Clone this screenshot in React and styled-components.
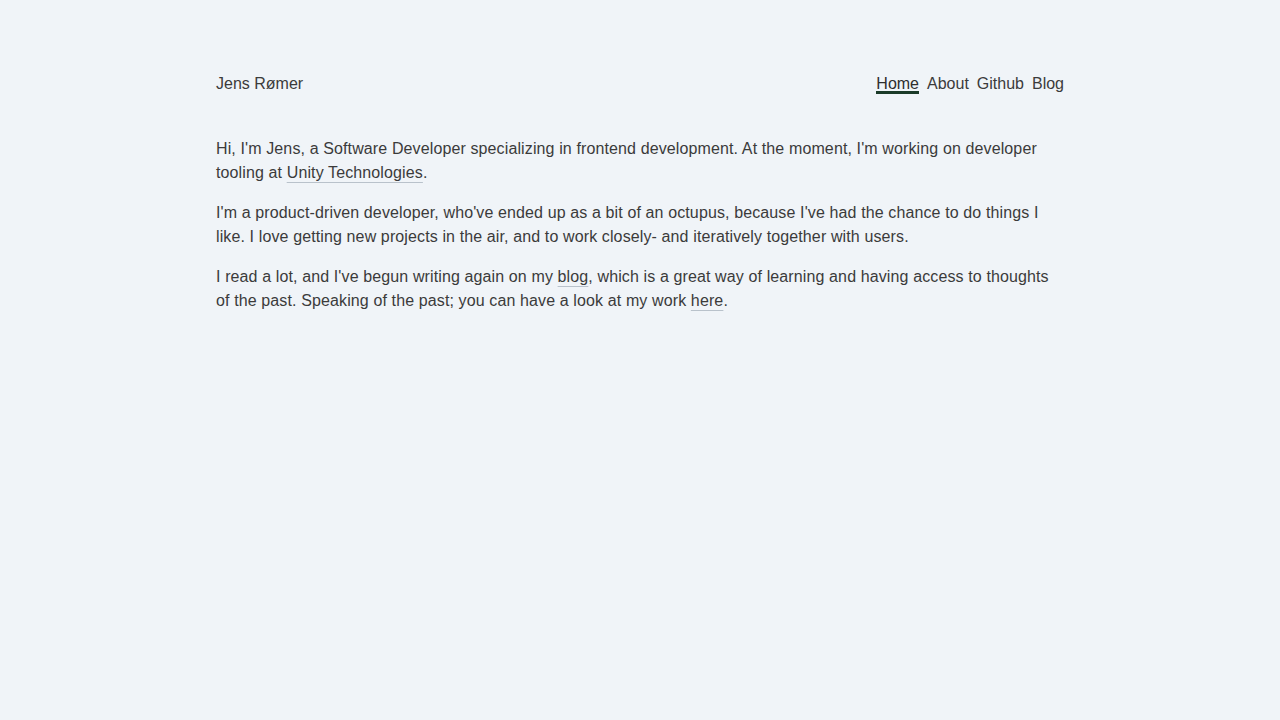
import React from 'react';
import styled, { createGlobalStyle } from 'styled-components';

const GlobalStyle = createGlobalStyle`
  body {
    margin: 0;
    background: #f0f4f8;
    color: #3b3b3b;
    font-family: "Liberation Sans", Arial, sans-serif;
    font-size: 16px;
    line-height: 24px;
  }
`

const Page = styled.div`
  width: 848px;
  margin: 0 auto;
  padding-top: 72px;
`

const Header = styled.header`
  display: flex;
  justify-content: space-between;
  align-items: flex-start;
  height: 24px;
  margin-bottom: 41px;
`

const Name = styled.div`
  color: #3b3b3b;
`

const Nav = styled.nav`
  display: flex;
  gap: 8px;
`

const NavLink = styled.a`
  display: inline-block;
  color: ${p => (p.active ? '#2e2e2e' : '#3b3b3b')};
  text-decoration: none;
  line-height: 15px;
  padding-top: 4px;
  border-bottom: 3px solid ${p => (p.active ? '#1b3b29' : 'transparent')};
`

const Main = styled.main`
  letter-spacing: 0.12px;
`

const Para = styled.p`
  margin: 0 0 16px;
`

const Link = styled.a`
  color: #3b3b3b;
  text-decoration: underline;
  text-decoration-color: #b9c2cb;
  text-decoration-thickness: 1px;
  text-underline-offset: 4px;
`

export default function App() {
  return (
    <Page>
      <GlobalStyle />
      <Header>
        <Name>Jens Rømer</Name>
        <Nav>
          <NavLink active>Home</NavLink>
          <NavLink>About</NavLink>
          <NavLink>Github</NavLink>
          <NavLink>Blog</NavLink>
        </Nav>
      </Header>
      <Main>
        <Para>
          Hi, I'm Jens, a Software Developer specializing in frontend development. At the moment, I'm working on developer tooling at <Link>Unity Technologies</Link>.
        </Para>
        <Para>
          I'm a product-driven developer, who've ended up as a bit of an octupus, because I've had the chance to do things I like. I love getting new projects in the air, and to work closely- and iteratively together with users.
        </Para>
        <Para>
          I read a lot, and I've begun writing again on my <Link>blog</Link>, which is a great way of learning and having access to thoughts of the past. Speaking of the past; you can have a look at my work <Link>here</Link>.
        </Para>
      </Main>
    </Page>
  );
}
